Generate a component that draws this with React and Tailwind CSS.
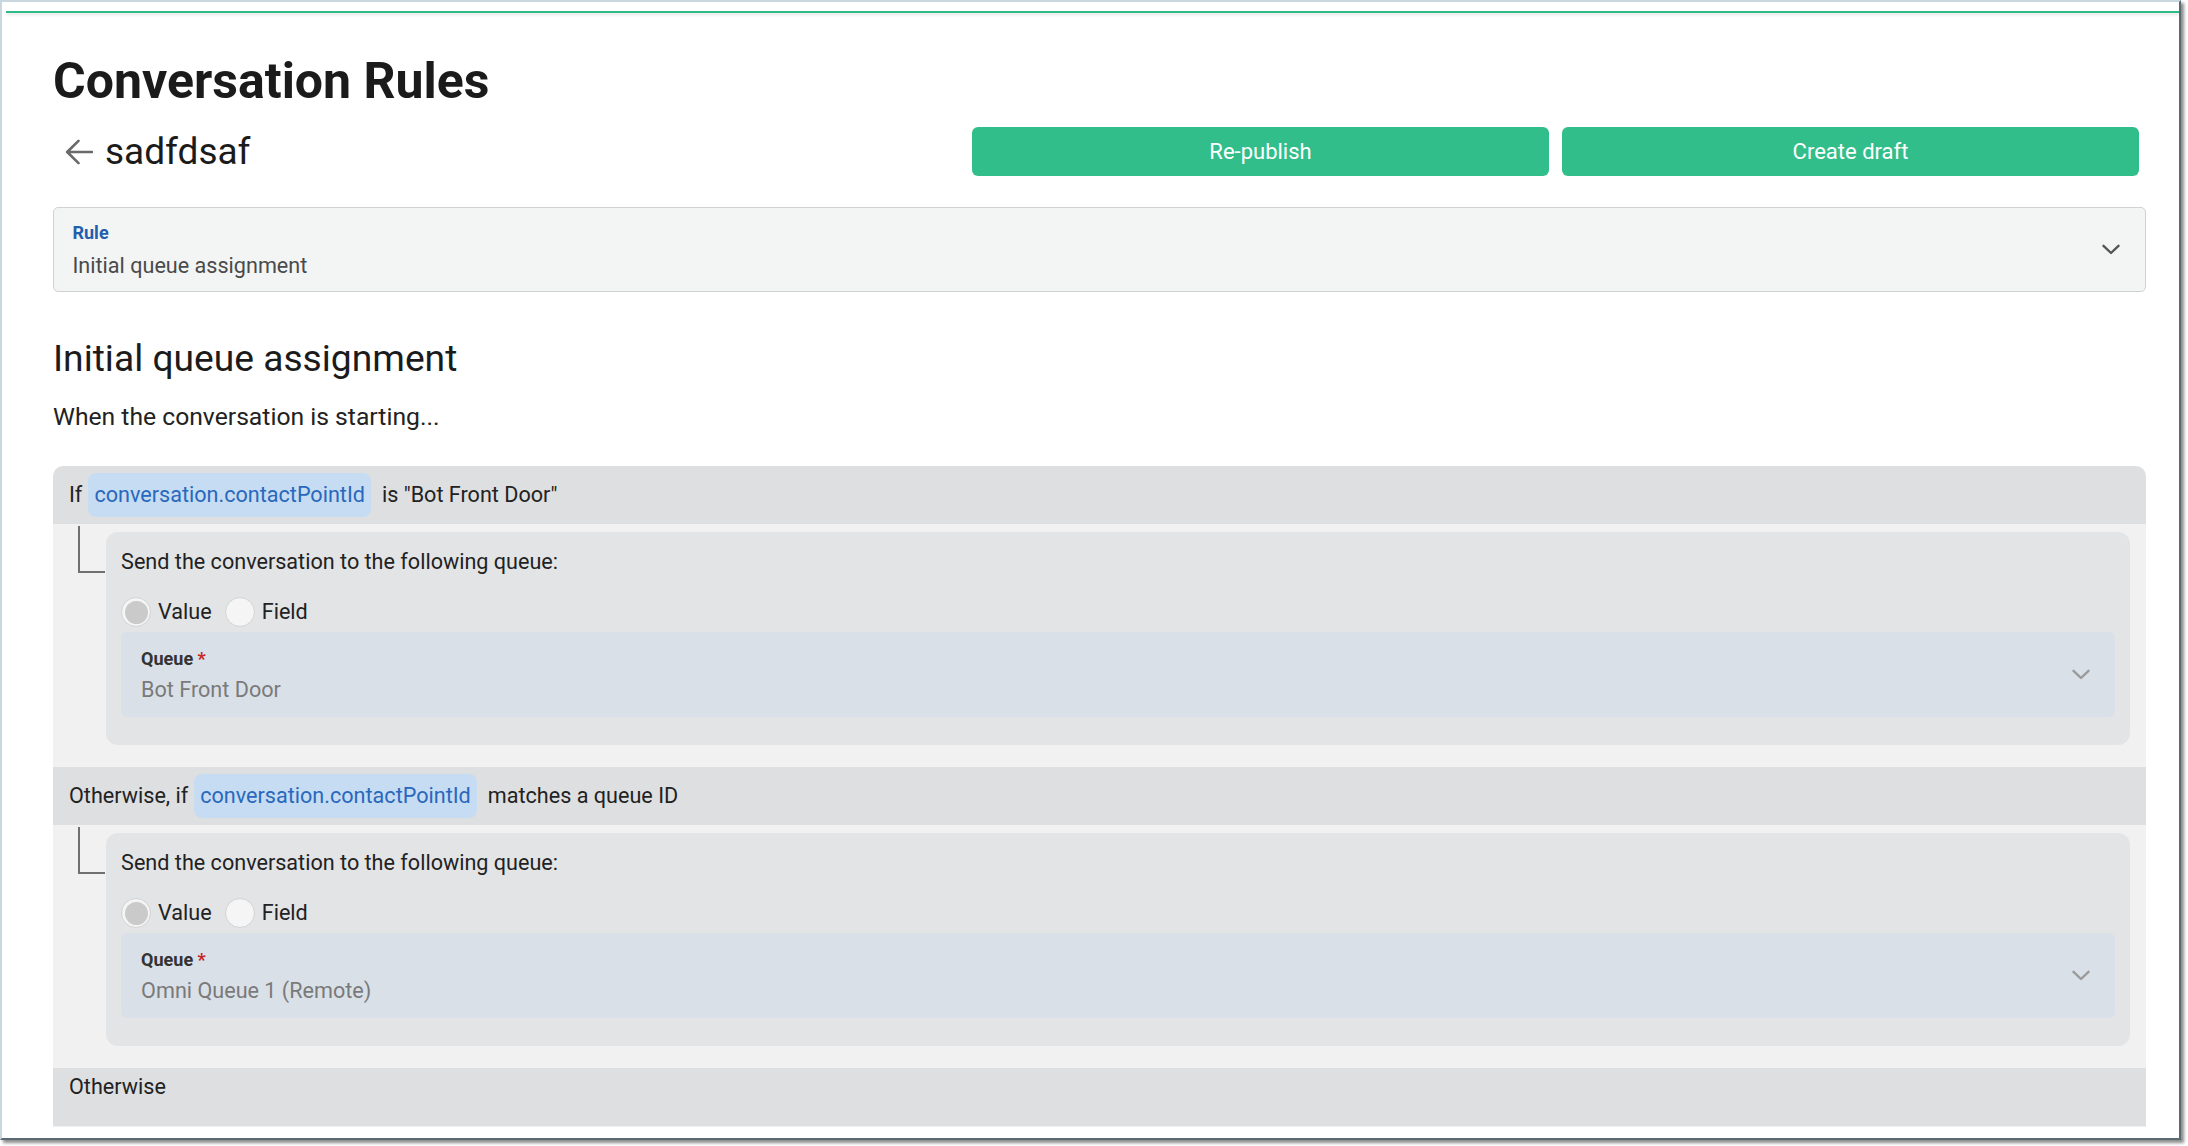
import React from "react";

function Chevron({ className = "", color = "#555" }) {
  return (
    <svg className={className} width="18" height="11" viewBox="0 0 18 11" fill="none">
      <path d="M1.5 1.8 9 9 16.5 1.8" stroke={color} strokeWidth="2.4" strokeLinecap="round" strokeLinejoin="round" />
    </svg>
  );
}

function Radio({ checked }) {
  return (
    <span className="flex h-[30px] w-[30px] items-center justify-center rounded-full border border-[#d2d3d3] bg-[#f5f5f5]">
      {checked && <span className="h-[23px] w-[23px] rounded-full bg-[#c9cac9]" />}
    </span>
  );
}

function Pill({ children }) {
  return (
    <span className="ml-[6px] mr-[11px] flex h-[44px] items-center rounded-[8px] bg-[#c6dcf2] px-[6px] text-[#2968bd]">
      {children}
    </span>
  );
}

function Connector() {
  return (
    <div className="w-[52.6px] shrink-0">
      <div className="ml-[25px] mt-[2px] h-[47px] w-[27px] border-b-2 border-l-2 border-[#707070]" />
    </div>
  );
}

function Branch({ queue }) {
  return (
    <div className="flex bg-[#f1f1f1] pb-[22px] pr-[16px]">
      <Connector />
      <div className="mt-[8px] flex-1 rounded-[12px] bg-[#e3e4e6] px-[15.5px] pt-[15.5px] pb-[28px]">
        <div className="text-[21.6px] leading-[28px] text-[#222]">Send the conversation to the following queue:</div>
        <div className="mt-[20.5px] flex h-[32px] items-center text-[21.6px] text-[#222]">
          <Radio checked />
          <span className="ml-[7px]">Value</span>
          <span className="ml-[13px]">
            <Radio />
          </span>
          <span className="ml-[7px]">Field</span>
        </div>
        <div className="mt-[4px] flex h-[85px] items-center rounded-[6px] bg-[#d9e0e7] pl-[20px] pr-[25px]">
          <div className="flex-1 self-start pt-[15.6px]">
            <div className="text-[18px] font-bold leading-[22px] text-[#333]">
              Queue <span className="text-[#c62828]">*</span>
            </div>
            <div className="mt-[6.5px] text-[21.6px] leading-[28px] text-[#7a7a7a]">{queue}</div>
          </div>
          <Chevron color="#9a9a9a" />
        </div>
      </div>
    </div>
  );
}

export default function App() {
  return (
    <div className="relative h-[1146px] w-[2188px] overflow-hidden bg-white" style={{ fontFamily: "Roboto, 'Liberation Sans', sans-serif" }}>
      <div className="flex h-[1140px] w-[2181px] flex-col border-2 border-[#c9d7e1] border-r-[#5b6a72] border-b-[#5b6a72] bg-white pt-[9px] pb-[11px] shadow-[3px_3px_3px_rgba(0,0,0,0.45)]">
        <div className="ml-[4px] h-[2px] shrink-0 bg-[#2dbc88] shadow-[0_2px_3px_rgba(0,0,0,0.12)]" />

        <div className="min-h-0 flex-1 overflow-hidden pl-[51px] pr-[33px]">
          <h1 className="mt-[43px] text-[50px] font-bold leading-[50px] text-[#1b1b1b]">Conversation Rules</h1>

          <div className="mt-[21px] flex h-[49px] items-center justify-between">
            <div className="flex items-center">
              <svg className="ml-[12px]" width="28" height="26" viewBox="0 0 28 26" fill="none">
                <path d="M27 13H2.5M13.5 1.8 2.2 13l11.3 11.2" stroke="#6a6a6a" strokeWidth="2.6" strokeLinecap="round" strokeLinejoin="round" />
              </svg>
              <span className="ml-[12px] text-[37px] text-[#1b1b1b]">sadfdsaf</span>
            </div>
            <div className="mr-[7px] flex gap-[13px]">
              <button className="h-[49px] w-[577px] rounded-[6px] bg-[#31be8a] text-[22px] text-white">Re-publish</button>
              <button className="h-[49px] w-[577px] rounded-[6px] bg-[#31be8a] text-[22px] text-white">Create draft</button>
            </div>
          </div>

          <div className="mt-[31px] flex h-[85px] items-center rounded-[5px] border-[1.5px] border-[#cfd2d5] bg-[#f3f4f4] pl-[18.5px] pr-[25px]">
            <div className="flex-1 self-start pt-[14px]">
              <div className="text-[18px] font-bold leading-[22px] text-[#1f5fae]">Rule</div>
              <div className="mt-[7.5px] text-[21.6px] leading-[28px] text-[#4a4a4a]">Initial queue assignment</div>
            </div>
            <Chevron color="#555" />
          </div>

          <h2 className="mt-[44px] text-[37.2px] leading-[44px] text-[#1b1b1b]">Initial queue assignment</h2>
          <p className="mt-[21.5px] text-[24.7px] leading-[30px] text-[#222]">When the conversation is starting...</p>

          <div className="mt-[34.5px] overflow-hidden rounded-t-[10px] text-[21.6px] text-[#222]">
            <div className="flex h-[58px] items-center bg-[#dedfe0] pl-[16px]">
              <span>If</span>
              <Pill>conversation.contactPointId</Pill>
              <span>is "Bot Front Door"</span>
            </div>
            <Branch queue="Bot Front Door" />

            <div className="flex h-[58px] items-center bg-[#dedfe0] pl-[16px]">
              <span>Otherwise, if</span>
              <Pill>conversation.contactPointId</Pill>
              <span>matches a queue ID</span>
            </div>
            <Branch queue="Omni Queue 1 (Remote)" />

            <div className="h-[58px] bg-[#dedfe0] pl-[16px] pt-[5px] leading-[28px]">Otherwise</div>
            <div className="flex h-[60px] bg-[#f1f1f1]">
              <Connector />
            </div>
          </div>
        </div>
      </div>
    </div>
  );
}
